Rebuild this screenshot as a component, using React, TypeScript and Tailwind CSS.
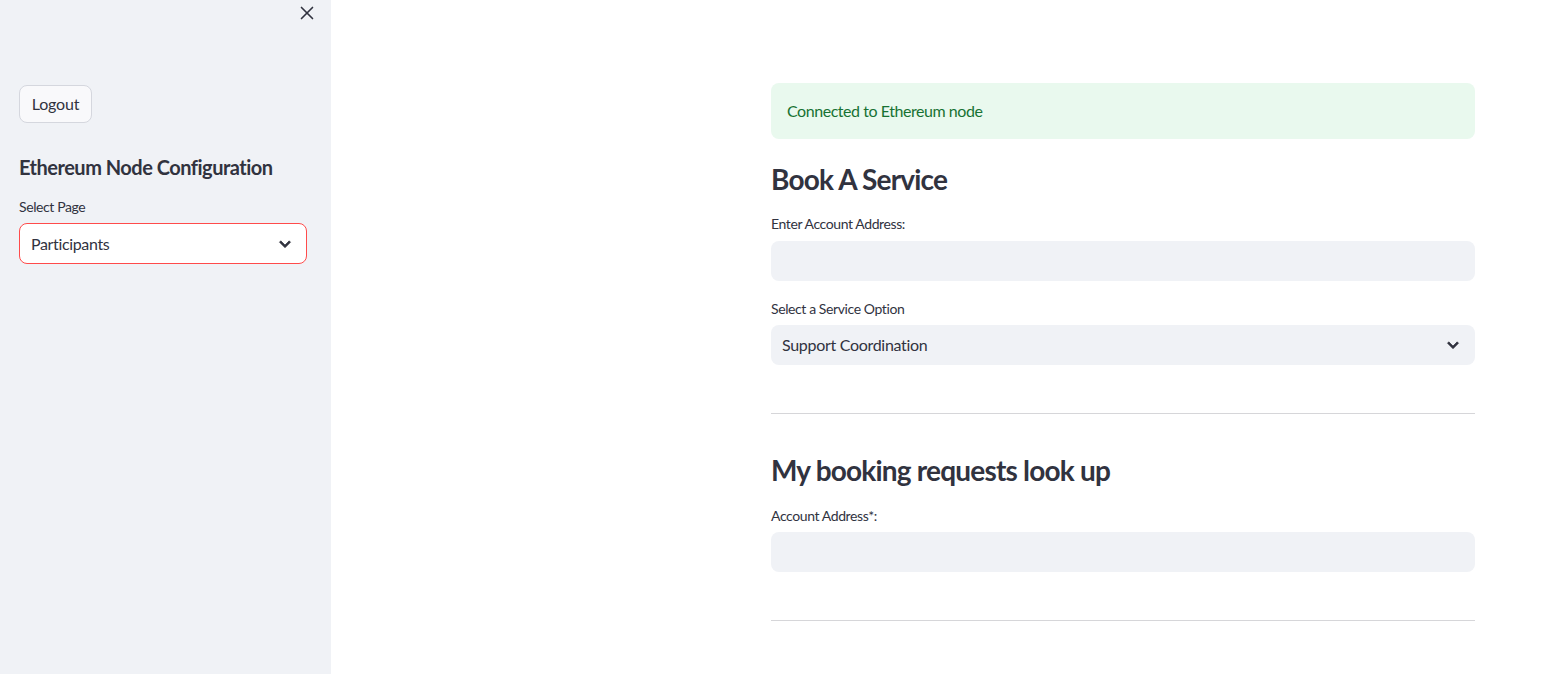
import { FC } from 'react';
import { X } from 'lucide-react';

const font = { fontFamily: 'Lato, "Open Sans", sans-serif' };

const Chevron: FC = () => (
  <svg viewBox="0 0 24 24" className="size-[22px] shrink-0 text-[#31333f]" fill="currentColor" aria-hidden="true">
    <path d="M16.59 8.59 12 13.17 7.41 8.59 6 10l6 6 6-6z" stroke="currentColor" strokeWidth="0.8" />
  </svg>
);

const Label: FC<{ text: string; className?: string }> = ({ text, className }) => (
  <div className={`h-[20px] text-[14px] leading-[20px] tracking-[-0.4px] text-[#31333f] ${className ?? ''}`}>{text}</div>
);

const App: FC = () => {
  return (
    <div className="flex h-[674px] w-full bg-white text-[#31333f]" style={font}>
      <aside className="flex w-[331px] shrink-0 flex-col bg-[#f0f2f6] pl-[19px]">
        <div className="flex h-[26px] items-center justify-end pr-[13px]">
          <X className="size-[22px] text-[#31333f]" strokeWidth={1.8} />
        </div>
        <button className="mt-[59px] h-[38px] w-[73px] rounded-lg border border-[#d5d7de] bg-[#f9f9fb] text-[16px] tracking-[-0.2px] text-[#31333f]">
          Logout
        </button>
        <h2 className="mt-[30px] h-[28px] text-[20px] leading-[28px] font-bold tracking-[-0.5px]">Ethereum Node Configuration</h2>
        <Label text="Select Page" className="mt-[16px]" />
        <div className="mt-[6px] flex h-[41px] w-[288px] items-center justify-between rounded-lg border border-[#ff4b4b] bg-white pl-[11px] pr-[10px] text-[16px] tracking-[-0.35px]">
          <span>Participants</span>
          <Chevron />
        </div>
      </aside>

      <main className="flex-1 pl-[440px]">
        <div className="flex w-[704px] flex-col pt-[83px]">
          <div className="flex h-[56px] items-center rounded-lg bg-[#e9f9ee] px-[16px] text-[16px] tracking-[-0.45px] text-[#177233]">
            Connected to Ethereum node
          </div>

          <h2 className="mt-[23px] h-[34px] text-[28px] leading-[34px] font-bold tracking-[-0.8px]">Book A Service</h2>
          <Label text="Enter Account Address:" className="mt-[18px]" />
          <div className="mt-[7px] h-[40px] rounded-lg bg-[#f0f2f6]" />

          <Label text="Select a Service Option" className="mt-[18px]" />
          <div className="mt-[6px] flex h-[40px] items-center justify-between rounded-lg bg-[#f0f2f6] pl-[11px] pr-[11px] text-[16px] tracking-[-0.3px]">
            <span>Support Coordination</span>
            <Chevron />
          </div>

          <hr className="mt-[48px] border-0 border-t border-[#d6d6d9]" />

          <h2 className="mt-[39px] h-[34px] text-[28px] leading-[34px] font-bold tracking-[-0.8px]">My booking requests look up</h2>
          <Label text="Account Address*:" className="mt-[19px]" />
          <div className="mt-[6px] h-[40px] rounded-lg bg-[#f0f2f6]" />

          <hr className="mt-[48px] border-0 border-t border-[#d6d6d9]" />
        </div>
      </main>
    </div>
  );
};

export default App;
